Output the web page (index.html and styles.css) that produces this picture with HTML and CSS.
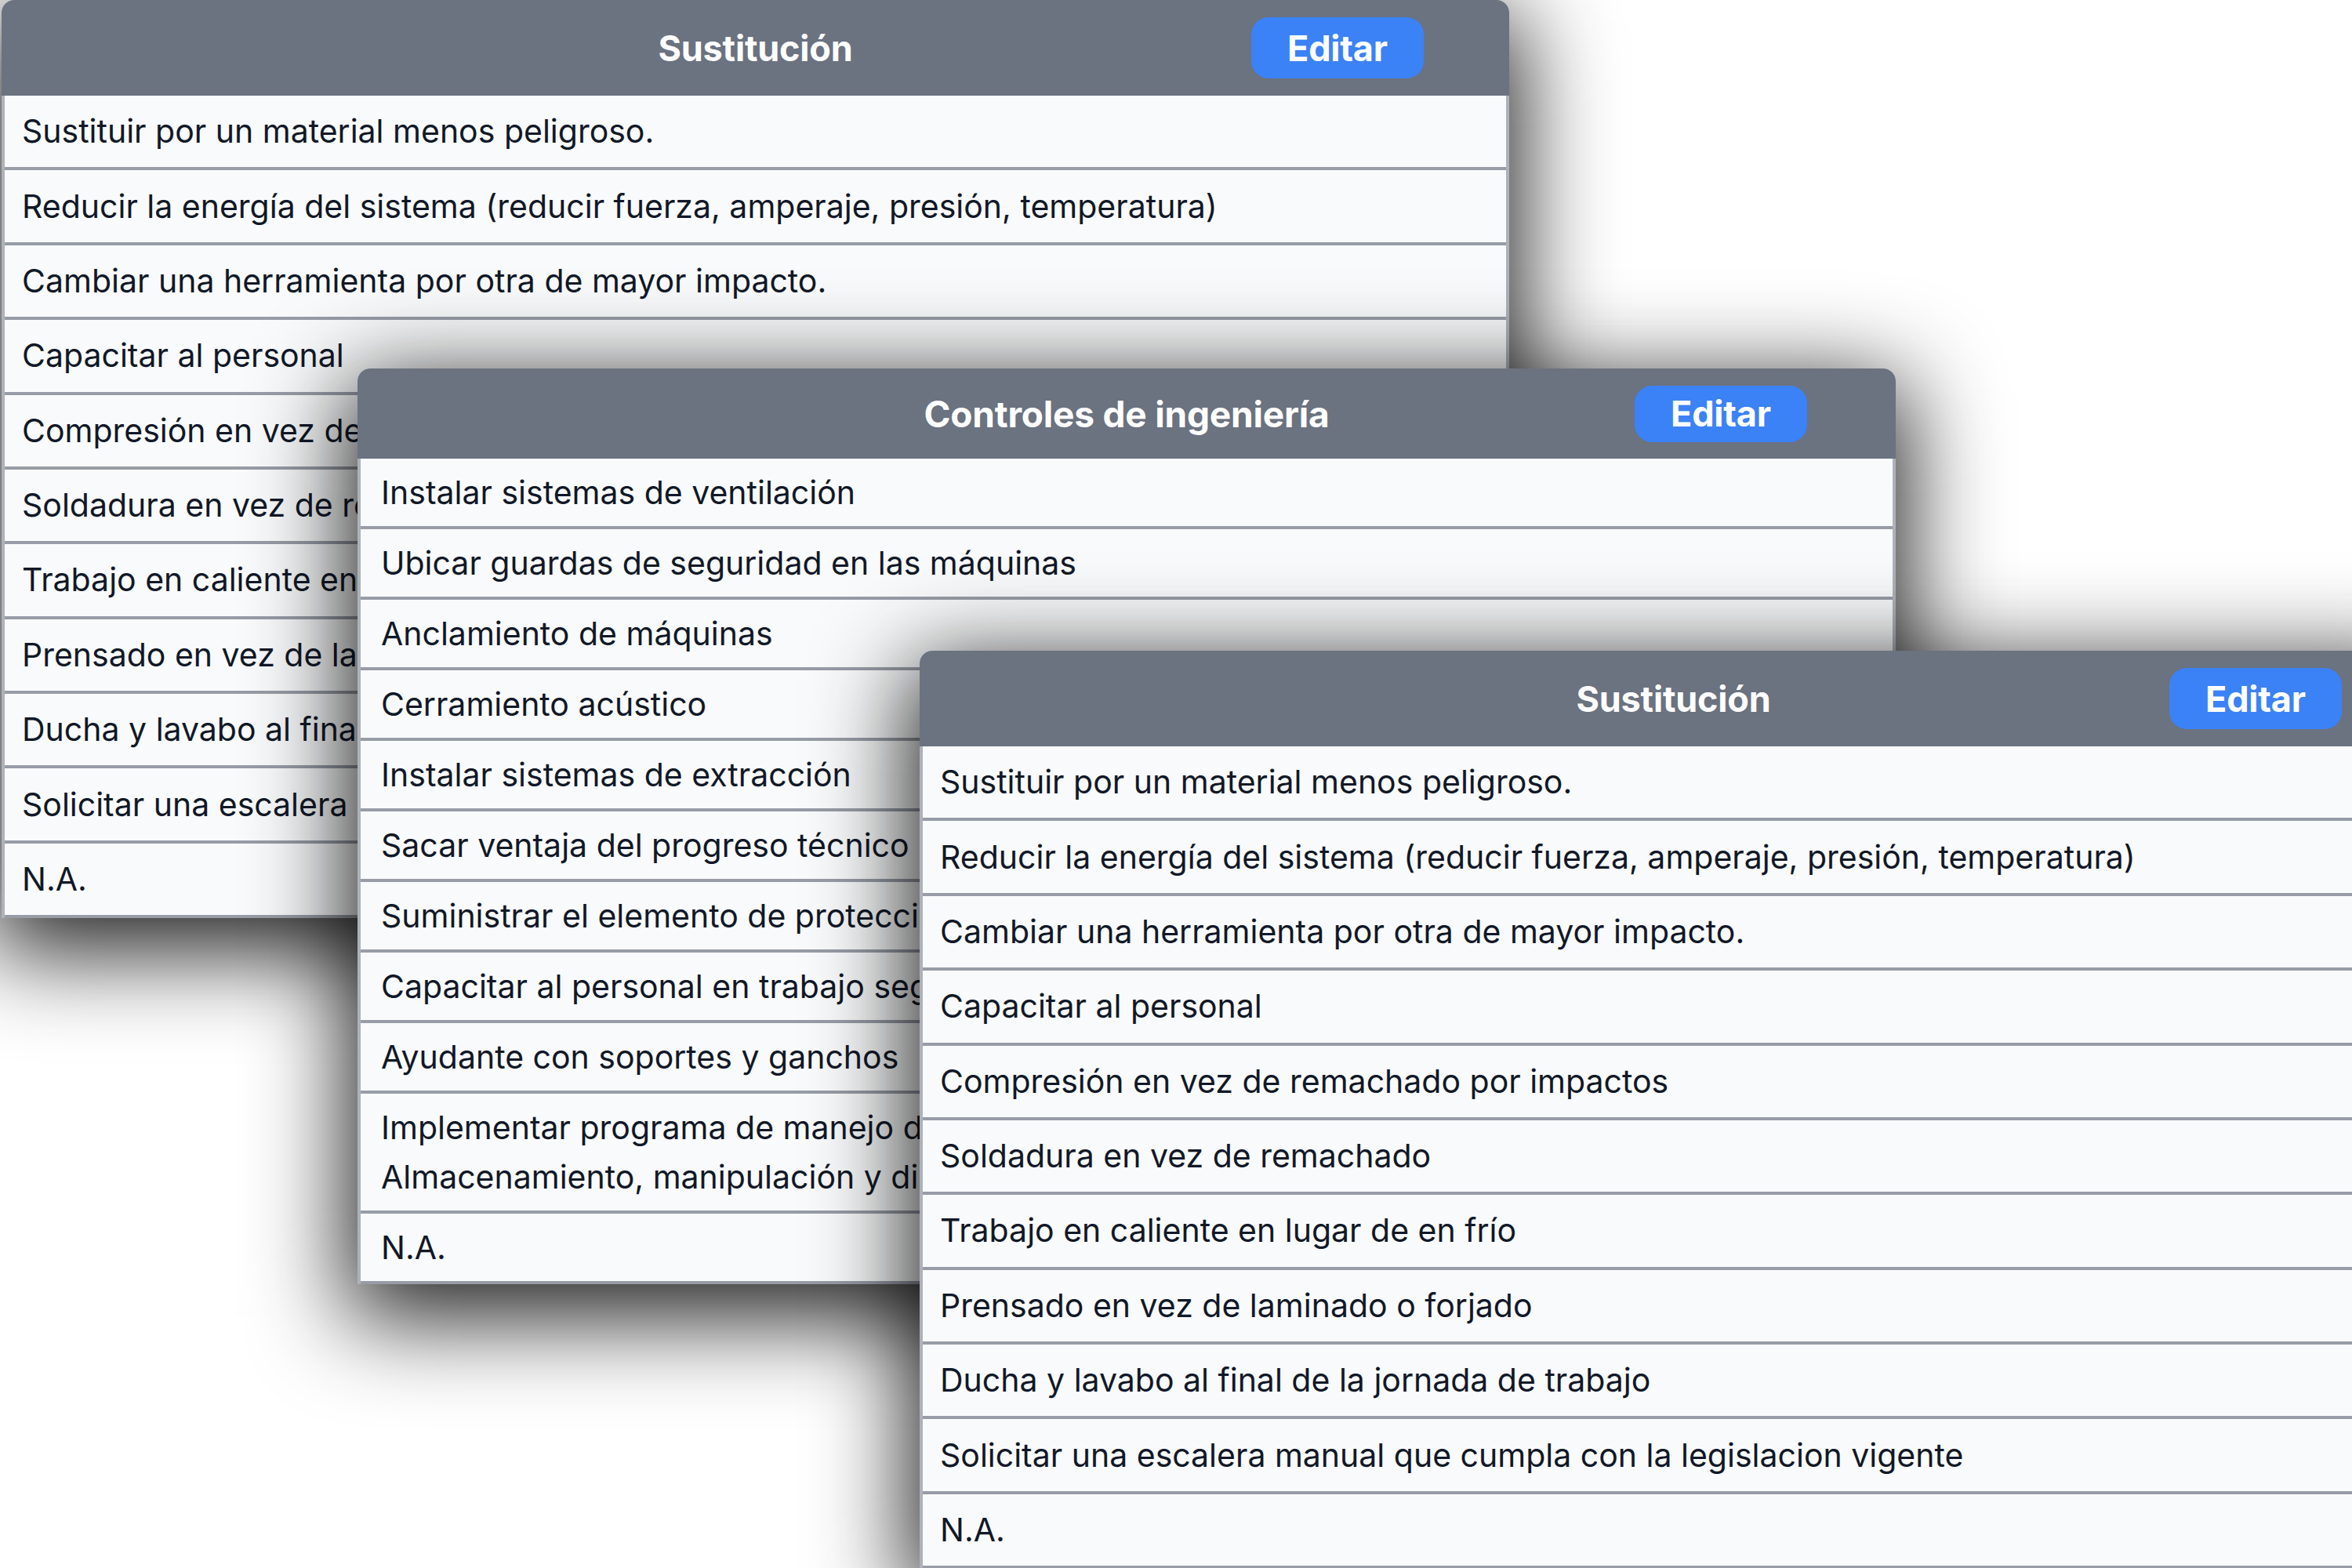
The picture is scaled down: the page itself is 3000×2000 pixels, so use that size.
FILE: index.html
```html
<!DOCTYPE html>
<html lang="es">
<head>
<meta charset="utf-8">
<title>Controles</title>
<link rel="stylesheet" href="styles.css">
</head>
<body>
<main class="canvas">
  <section class="card card-back">
    <header class="card-head">
      <h2 class="card-title">Sustitución</h2>
      <button class="btn-edit">Editar</button>
    </header>
    <ul class="card-list">
      <li>Sustituir por un material menos peligroso.</li>
      <li>Reducir la energía del sistema (reducir fuerza, amperaje, presión, temperatura)</li>
      <li>Cambiar una herramienta por otra de mayor impacto.</li>
      <li>Capacitar al personal</li>
      <li>Compresión en vez de remachado por impactos</li>
      <li>Soldadura en vez de remachado</li>
      <li>Trabajo en caliente en lugar de en frío</li>
      <li>Prensado en vez de laminado o forjado</li>
      <li>Ducha y lavabo al final de la jornada de trabajo</li>
      <li>Solicitar una escalera manual que cumpla con la legislacion vigente</li>
      <li>N.A.</li>
    </ul>
  </section>

  <section class="card card-mid">
    <header class="card-head">
      <h2 class="card-title">Controles de ingeniería</h2>
      <button class="btn-edit">Editar</button>
    </header>
    <ul class="card-list">
      <li>Instalar sistemas de ventilación</li>
      <li>Ubicar guardas de seguridad en las máquinas</li>
      <li>Anclamiento de máquinas</li>
      <li>Cerramiento acústico</li>
      <li>Instalar sistemas de extracción</li>
      <li>Sacar ventaja del progreso técnico</li>
      <li>Suministrar el elemento de protección adecuado</li>
      <li>Capacitar al personal en trabajo seguro</li>
      <li>Ayudante con soportes y ganchos</li>
      <li>Implementar programa de manejo de sustancias químicas:<br>Almacenamiento, manipulación y disposición final</li>
      <li>N.A.</li>
    </ul>
  </section>

  <section class="card card-front">
    <header class="card-head">
      <h2 class="card-title">Sustitución</h2>
      <button class="btn-edit">Editar</button>
    </header>
    <ul class="card-list">
      <li>Sustituir por un material menos peligroso.</li>
      <li>Reducir la energía del sistema (reducir fuerza, amperaje, presión, temperatura)</li>
      <li>Cambiar una herramienta por otra de mayor impacto.</li>
      <li>Capacitar al personal</li>
      <li>Compresión en vez de remachado por impactos</li>
      <li>Soldadura en vez de remachado</li>
      <li>Trabajo en caliente en lugar de en frío</li>
      <li>Prensado en vez de laminado o forjado</li>
      <li>Ducha y lavabo al final de la jornada de trabajo</li>
      <li>Solicitar una escalera manual que cumpla con la legislacion vigente</li>
      <li>N.A.</li>
    </ul>
  </section>
</main>
</body>
</html>
```
FILE: styles.css
```css
html, body {
  margin: 0;
  padding: 0;
  background: #ffffff;
  overflow: hidden;
}

.canvas {
  position: relative;
  width: 3000px;
  height: 2000px;
  overflow: hidden;
  font-family: "Inter", "Noto Sans", sans-serif;
  color: #111827;
}

/* ---------- card ---------- */
.card {
  position: absolute;
  width: 1923px;
  background: #f9fafb;
  border-radius: 16px 16px 0 0;
  box-shadow: 0 30px 120px 12px rgba(0, 0, 0, 0.88);
  --head-h: 122px;
  --btn-h: 78px;
  --btn-gap: 109px;
  --title-size: 45px;
  --row-lh: 61px;
  --row-pad: 15.2px;
  --text-pad: 22px;
}

.card-back  { left: 2px;    top: 0;     }
.card-mid   { left: 456px;  top: 470px; width: 1962px;
  --head-h: 115px;
  --btn-h: 72px;
  --btn-gap: 113px;
  --title-size: 46px;
  --row-lh: 63px;
  --row-pad: 11.5px;
  --text-pad: 26px;
}
.card-front { left: 1173px; top: 830px; }

.card-head {
  height: var(--head-h);
  background: #6b7280;
  border-radius: 16px 16px 0 0;
  display: grid;
  grid-template-columns: 1fr auto 1fr;
  align-items: center;
}

.card-title {
  grid-column: 2;
  margin: 0;
  font-size: var(--title-size);
  font-weight: 700;
  color: #ffffff;
  letter-spacing: -0.2px;
}

.btn-edit {
  grid-column: 3;
  justify-self: end;
  margin-right: var(--btn-gap);
  width: 220px;
  height: var(--btn-h);
  border: 0;
  border-radius: 22px;
  background: #3b82f6;
  color: #ffffff;
  font-family: "Inter", "Noto Sans", sans-serif;
  font-size: 45px;
  font-weight: 700;
  padding: 0;
  letter-spacing: -0.2px;
}

/* ---------- list ---------- */
.card-list {
  list-style: none;
  margin: 0;
  padding: 0;
  border-left: 4px solid #adb2ba;
  border-right: 4px solid #adb2ba;
}

.card-list li {
  font-size: 41px;
  line-height: var(--row-lh);
  padding: var(--row-pad) 20px var(--row-pad) var(--text-pad);
  border-bottom: 4px solid #979ca6;
  background: #f9fafb;
  white-space: nowrap;
}
```
